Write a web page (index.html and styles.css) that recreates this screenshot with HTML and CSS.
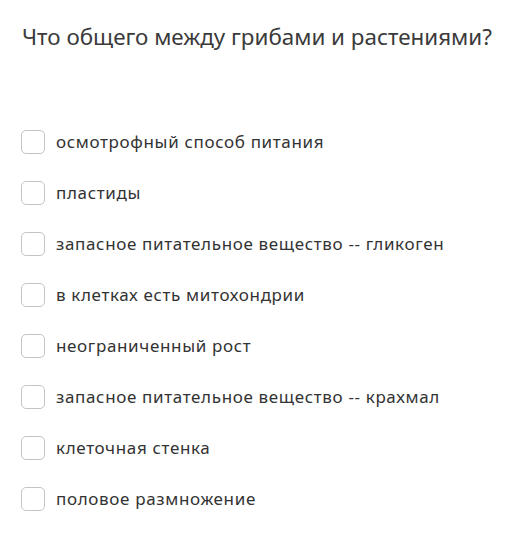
FILE: index.html
```html
<!DOCTYPE html>
<html lang="ru">
<head>
<meta charset="utf-8">
<link rel="stylesheet" href="styles.css">
</head>
<body>
<div class="quiz">
  <h1 class="question">Что общего между грибами и растениями?</h1>
  <ul class="options">
    <li class="option"><span class="box"></span><span class="label">осмотрофный способ питания</span></li>
    <li class="option"><span class="box"></span><span class="label">пластиды</span></li>
    <li class="option"><span class="box"></span><span class="label">запасное питательное вещество -- гликоген</span></li>
    <li class="option"><span class="box"></span><span class="label">в клетках есть митохондрии</span></li>
    <li class="option"><span class="box"></span><span class="label">неограниченный рост</span></li>
    <li class="option"><span class="box"></span><span class="label">запасное питательное вещество -- крахмал</span></li>
    <li class="option"><span class="box"></span><span class="label">клеточная стенка</span></li>
    <li class="option"><span class="box"></span><span class="label">половое размножение</span></li>
  </ul>
</div>
</body>
</html>
```
FILE: styles.css
```css
html, body {
  margin: 0;
  padding: 0;
  background: #ffffff;
}
body {
  font-family: "Noto Sans", "Open Sans", sans-serif;
  color: #333333;
}
.quiz {
  padding: 22px 0 0 22px;
}
.question {
  margin: 0;
  font-size: 22.4px;
  font-weight: 400;
  line-height: 30px;
  color: #3a3a3a;
}
.options {
  list-style: none;
  margin: 78px 0 0 0;
  padding: 0;
  display: flex;
  flex-direction: column;
  gap: 27px;
}
.option {
  display: flex;
  align-items: center;
  gap: 11px;
  height: 24px;
}
.box {
  width: 22px;
  height: 22px;
  border: 1px solid #c4c4c4;
  border-radius: 5px;
  flex: none;
  margin-left: -1px;
}
.label {
  font-size: 17px;
  line-height: 24px;
  letter-spacing: 0.65px;
  color: #333333;
}
```
